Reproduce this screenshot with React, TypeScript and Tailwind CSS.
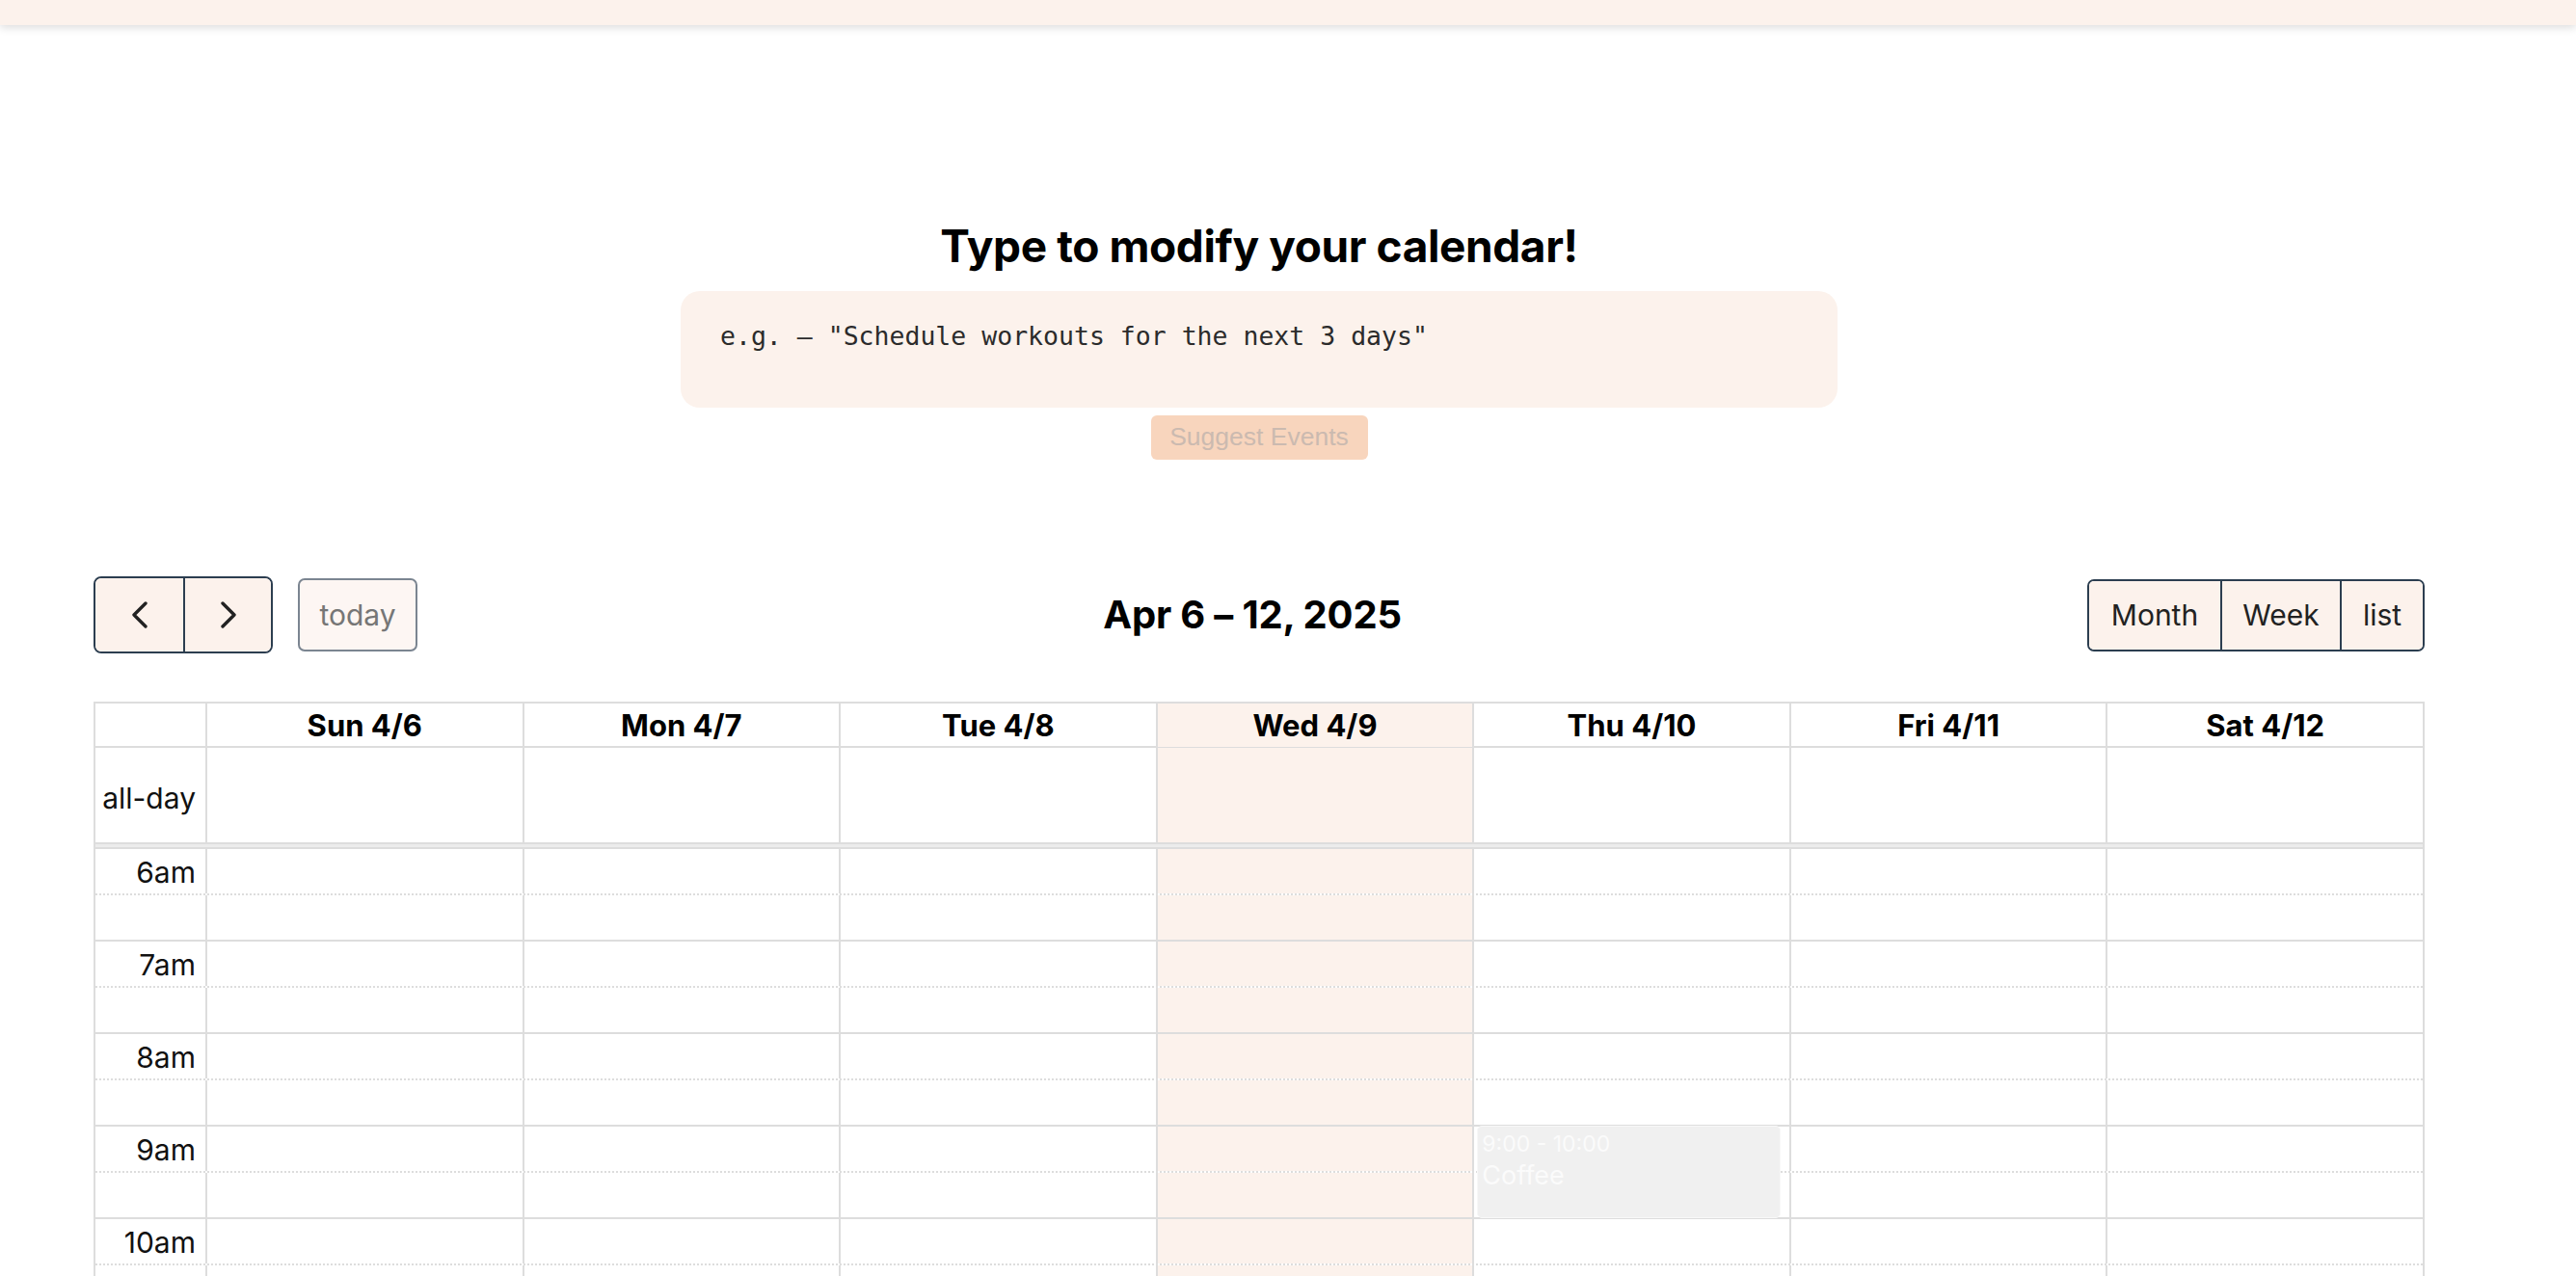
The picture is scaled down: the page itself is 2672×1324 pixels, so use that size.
import React from 'react';

const DAYS = ['Sun 4/6', 'Mon 4/7', 'Tue 4/8', 'Wed 4/9', 'Thu 4/10', 'Fri 4/11', 'Sat 4/12'];
const TODAY_INDEX = 3;
const HOURS = ['6am', '7am', '8am', '9am', '10am'];

const Chevron: React.FC<{ dir: 'left' | 'right' }> = ({ dir }) => (
  <svg width="18" height="28" viewBox="0 0 18 28" fill="none" stroke="#222" strokeWidth="3.4" strokeLinecap="round" strokeLinejoin="round">
    {dir === 'left' ? <polyline points="15,2 3,14 15,26" /> : <polyline points="3,2 15,14 3,26" />}
  </svg>
);

const rowGrid = 'grid grid-cols-[114px_repeat(7,minmax(0,1fr))]';

const App: React.FC = () => {
  return (
    <div className="min-h-screen bg-white font-['Inter','Liberation_Sans',sans-serif] text-black">
      {/* top bar */}
      <div className="h-[26px] bg-[#fcf2ec] shadow-[0_3px_8px_rgba(0,0,0,0.13)]" />

      <div className="ml-[97px] w-[2418px]">
        {/* prompt area */}
        <div className="flex flex-col items-center">
          <h1 className="mt-[202px] text-[46px] leading-[55px] font-bold tracking-[-0.4px]">Type to modify your calendar!</h1>
          <textarea
            className="mt-[19px] h-[121px] w-[1200px] resize-none rounded-[20px] bg-[#fcf2ec] px-[41px] pt-[27px] font-['DejaVu_Sans_Mono','Liberation_Mono',monospace] text-[26.5px] leading-[1.5] text-[#2b2b2b] outline-none placeholder:text-[#2b2b2b]"
            placeholder={'e.g. – "Schedule workouts for the next 3 days"'}
          />
          <button className="mt-[8px] h-[46px] w-[225px] rounded-[6px] bg-[#f8d5bd] font-['Liberation_Sans',Arial,sans-serif] text-[26.5px] text-[#cbbab0]">
            Suggest Events
          </button>
        </div>

        {/* toolbar */}
        <div className="mt-[121px] flex h-[80px] items-center justify-between">
          <div className="flex items-center gap-[26px]">
            <div className="flex h-[80px] overflow-hidden rounded-[8px] border-2 border-[#2c3e50]">
              <button className="flex w-[91px] items-center justify-center bg-[#fcf2ec]">
                <Chevron dir="left" />
              </button>
              <button className="flex w-[91px] items-center justify-center border-l-2 border-[#2c3e50] bg-[#fcf2ec]">
                <Chevron dir="right" />
              </button>
            </div>
            <button className="h-[76px] w-[124px] rounded-[7px] border-2 border-[#7b8591] bg-[#fdf6f3] text-[30px] text-[#767676]">today</button>
          </div>
          <h2 className="text-[40px] font-bold tracking-[-0.2px]">Apr 6 – 12, 2025</h2>
          <div className="flex h-[75px] overflow-hidden rounded-[7px] border-2 border-[#2c3e50] text-[30px] text-[#222]">
            <button className="w-[136px] bg-[#fcf2ec]">Month</button>
            <button className="w-[124px] border-l-2 border-[#2c3e50] bg-[#fcf2ec]">Week</button>
            <button className="w-[86px] border-l-2 border-[#2c3e50] bg-[#fcf2ec]">list</button>
          </div>
        </div>

        {/* calendar grid */}
        <div className="mt-[50px] border-2 border-[#ddd]">
          {/* header row */}
          <div className={`${rowGrid} h-[46px] border-b-2 border-[#ddd]`}>
            <div />
            {DAYS.map((d, i) => (
              <div
                key={d}
                className={`flex items-center justify-center border-l-2 border-[#ddd] pt-[1px] text-[31px] leading-[44px] font-bold ${i === TODAY_INDEX ? 'bg-[#fcf2ec]' : ''}`}
              >
                {d}
              </div>
            ))}
          </div>

          {/* all-day row */}
          <div className={`${rowGrid} h-[98px]`}>
            <div className="flex items-center justify-end pr-[10px] pt-[6px] text-[30px] leading-[45px] text-[#111]">all-day</div>
            {DAYS.map((d, i) => (
              <div key={d} className={`border-l-2 border-[#ddd] ${i === TODAY_INDEX ? 'bg-[#fcf2ec]' : ''}`} />
            ))}
          </div>

          {/* divider */}
          <div className="h-[5px] border-t-2 border-[#ddd] bg-[#ececec]" />

          {/* time slots */}
          {HOURS.map((h) => (
            <React.Fragment key={h}>
              <div className={`${rowGrid} h-[48px] border-t-2 border-solid border-[#ddd]`}>
                <div className="pr-[10px] pt-[2px] text-right text-[30px] leading-[44px] text-[#111]">{h}</div>
                {DAYS.map((d, i) => (
                  <div key={d} className={`relative border-l-2 border-[#ddd] ${i === TODAY_INDEX ? 'bg-[#fcf2ec]' : ''}`}>
                    {h === '9am' && i === 4 && (
                      <div className="absolute top-[-1px] right-[9px] left-[3px] z-10 h-[96px] rounded-[5px] border border-[#f8f8f8] bg-[#f0f0f0] pl-[4px] pt-[3px] text-[#fbfbfb]">
                        <div className="text-[23px] leading-[30px]">9:00 - 10:00</div>
                        <div className="text-[27px] leading-[35px]">Coffee</div>
                      </div>
                    )}
                  </div>
                ))}
              </div>
              <div className={`${rowGrid} h-[48px] border-t-2 border-dotted border-[#ddd]`}>
                <div />
                {DAYS.map((d, i) => (
                  <div key={d} className={`border-l-2 border-[#ddd] ${i === TODAY_INDEX ? 'bg-[#fcf2ec]' : ''}`} />
                ))}
              </div>
            </React.Fragment>
          ))}
        </div>
      </div>
    </div>
  );
};

export default App;
